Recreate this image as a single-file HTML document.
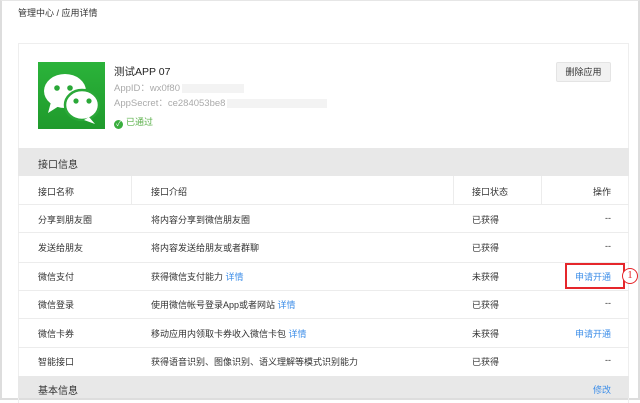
<!DOCTYPE html>
<html><head><meta charset="utf-8"><style>
*{margin:0;padding:0;box-sizing:border-box}
body{width:640px;height:400px;background:#fff;font-family:"Liberation Sans","Noto Sans CJK SC",sans-serif;font-size:9px;color:#333;position:relative;overflow:hidden}
.frame{position:absolute;left:0;top:0;width:640px;height:400px;border:2px solid #ddd;border-top:1px solid #e6e6e6}
.a{position:absolute;white-space:nowrap}
.card{position:absolute;left:18px;top:43px;width:611px;height:360px;border:1px solid #eee;border-bottom:none}
.gray{position:absolute;left:18px;width:611px;background:#e8e8e8}
.hl{position:absolute;left:18px;width:611px;height:1px;background:#ececec}
.vl{position:absolute;top:176px;height:28px;width:1px;background:#ececec}
.blue{color:#3d8ee8}
.r{text-align:right;width:60px}
</style></head><body>
<div class="frame"></div>
<div class="a" style="left:18px;top:6px;font-size:9px">管理中心 / 应用详情</div>
<div class="card"></div>
<svg class="a" style="left:38px;top:62px" width="67" height="67" viewBox="0 0 67 67">
<defs><linearGradient id="g" x1="0" y1="0" x2="0" y2="1"><stop offset="0" stop-color="#2bb33a"/><stop offset="1" stop-color="#1f9a2c"/></linearGradient></defs>
<rect width="67" height="67" fill="url(#g)"/>
<ellipse cx="27" cy="29" rx="21" ry="17" fill="#fff"/>
<path d="M13 40l-3 11 11-7z" fill="#fff"/>
<ellipse cx="44" cy="43" rx="17" ry="15" fill="#fff" stroke="#2aa838" stroke-width="2.5"/>
<path d="M51 55l6 7-11-4z" fill="#fff"/>
<circle cx="19" cy="26" r="2.8" fill="#2aa838"/><circle cx="32" cy="26" r="2.8" fill="#2aa838"/>
<circle cx="38" cy="39" r="2.6" fill="#2aa838"/><circle cx="51" cy="39" r="2.6" fill="#2aa838"/>
</svg>
<div class="a" style="left:114px;top:64px;font-size:10.5px;color:#222">测试APP 07</div>
<div class="a" style="left:114px;top:80px;font-size:9.5px;color:#aaa">AppID：wx0f80<span style="display:inline-block;width:62px;height:9px;background:#f3f3f3;vertical-align:middle;margin-left:2px"></span></div>
<div class="a" style="left:114px;top:95px;font-size:9.5px;color:#aaa">AppSecret：ce284053be8<span style="display:inline-block;width:100px;height:9px;background:#f3f3f3;vertical-align:middle;margin-left:2px"></span></div>
<div class="a" style="left:114px;top:115px;font-size:9px;color:#5bb04a"><span style="display:inline-block;width:9px;height:9px;border-radius:50%;background:#3aae3e;vertical-align:-1px;margin-right:3px;color:#fff;font-size:7px;line-height:9px;text-align:center">✓</span>已通过</div>
<div class="a" style="left:556px;top:62px;width:55px;height:20px;background:#f2f2f2;border:1px solid #e4e4e4;border-radius:2px;text-align:center;line-height:18px;font-size:9px">删除应用</div>
<div class="gray" style="top:148px;height:28px"></div>
<div class="a" style="left:38px;top:156px;font-size:10px">接口信息</div>
<div class="vl" style="left:131px"></div><div class="vl" style="left:453px"></div><div class="vl" style="left:541px"></div>
<div class="hl" style="top:204px"></div><div class="hl" style="top:232px"></div><div class="hl" style="top:262px"></div><div class="hl" style="top:290px"></div><div class="hl" style="top:318px"></div><div class="hl" style="top:347px"></div>
<div class="a" style="left:38px;top:185px">接口名称</div><div class="a" style="left:151px;top:185px">接口介绍</div><div class="a" style="left:472px;top:185px">接口状态</div><div class="a r" style="left:551px;top:185px">操作</div>

<div class="a" style="left:38px;top:213px">分享到朋友圈</div><div class="a" style="left:151px;top:213px">将内容分享到微信朋友圈</div><div class="a" style="left:472px;top:213px">已获得</div><div class="a r" style="left:551px;top:213px">--</div>
<div class="a" style="left:38px;top:241px">发送给朋友</div><div class="a" style="left:151px;top:241px">将内容发送给朋友或者群聊</div><div class="a" style="left:472px;top:241px">已获得</div><div class="a r" style="left:551px;top:241px">--</div>
<div class="a" style="left:38px;top:270px">微信支付</div><div class="a" style="left:151px;top:270px">获得微信支付能力 <span class="blue">详情</span></div><div class="a" style="left:472px;top:270px">未获得</div><div class="a r blue" style="left:551px;top:270px">申请开通</div>
<div class="a" style="left:565px;top:263px;width:60px;height:26px;border:2px solid #e5262b"></div>
<div class="a" style="left:622px;top:268px;width:16px;height:16px;border:1.5px solid #e5262b;border-radius:50%;color:#e5262b;font-family:'Liberation Serif',serif;font-size:11px;text-align:center;line-height:13px;background:#fff">1</div>
<div class="a" style="left:38px;top:298px">微信登录</div><div class="a" style="left:151px;top:298px">使用微信帐号登录App或者网站 <span class="blue">详情</span></div><div class="a" style="left:472px;top:298px">已获得</div><div class="a r" style="left:551px;top:298px">--</div>
<div class="a" style="left:38px;top:327px">微信卡券</div><div class="a" style="left:151px;top:327px">移动应用内领取卡券收入微信卡包 <span class="blue">详情</span></div><div class="a" style="left:472px;top:327px">未获得</div><div class="a r blue" style="left:551px;top:327px">申请开通</div>
<div class="a" style="left:38px;top:355px">智能接口</div><div class="a" style="left:151px;top:355px">获得语音识别、图像识别、语义理解等模式识别能力</div><div class="a" style="left:472px;top:355px">已获得</div><div class="a r" style="left:551px;top:355px">--</div>
<div class="gray" style="top:376px;height:22px"></div>
<div class="a" style="left:38px;top:382px;font-size:10px">基本信息</div>
<div class="a r blue" style="left:551px;top:383px">修改</div>
</body></html>
